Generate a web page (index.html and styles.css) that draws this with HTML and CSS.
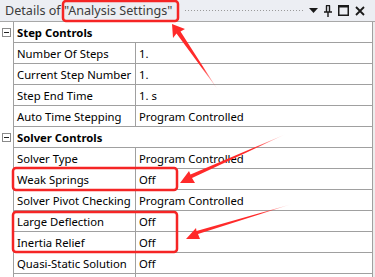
FILE: index.html
```html
<!DOCTYPE html>
<html lang="en">
  <head>
    <meta charset="UTF-8" />
    <title>Details of "Analysis Settings"</title>
    <link rel="stylesheet" href="styles.css">
  </head>
  <body>
    <div class="panel">
      <div class="titlebar">
        <span class="title">Details of "Analysis Settings"</span>
        <span class="grip"></span>
        <span class="tools">
          <svg width="9" height="6" viewBox="0 0 9 6"><path d="M0 0h9L4.5 5z" fill="#1a1a1a"/></svg>
          <svg width="8" height="12" viewBox="0 0 8 12"><path d="M2 0.5h4M2.5 0.5v6M5.5 0.5v6M0 7h8M4 7v5" stroke="#1a1a1a" stroke-width="1.4" fill="none"/></svg>
          <svg width="11" height="11" viewBox="0 0 11 11"><rect x="0.75" y="0.75" width="9.5" height="9.5" stroke="#1a1a1a" stroke-width="1.5" fill="none"/><path d="M0.75 1.5h9.5" stroke="#1a1a1a" stroke-width="2"/></svg>
          <svg width="10" height="10" viewBox="0 0 10 10"><path d="M1 1l8 8M9 1l-8 8" stroke="#1a1a1a" stroke-width="1.8"/></svg>
        </span>
      </div>

      <div class="props">
        <div class="row group">
          <div class="gutter"><span class="toggle"></span></div>
          <div class="name">Step Controls</div>
        </div>
        <div class="row"><div class="gutter"></div><div class="name">Number Of Steps</div><div class="value">1.</div></div>
        <div class="row"><div class="gutter"></div><div class="name">Current Step Number</div><div class="value">1.</div></div>
        <div class="row"><div class="gutter"></div><div class="name">Step End Time</div><div class="value">1. s</div></div>
        <div class="row"><div class="gutter"></div><div class="name">Auto Time Stepping</div><div class="value">Program Controlled</div></div>

        <div class="row group">
          <div class="gutter"><span class="toggle"></span></div>
          <div class="name">Solver Controls</div>
        </div>
        <div class="row"><div class="gutter"></div><div class="name">Solver Type</div><div class="value">Program Controlled</div></div>
        <div class="row"><div class="gutter"></div><div class="name">Weak Springs</div><div class="value">Off</div></div>
        <div class="row"><div class="gutter"></div><div class="name">Solver Pivot Checking</div><div class="value">Program Controlled</div></div>
        <div class="row"><div class="gutter"></div><div class="name">Large Deflection</div><div class="value">Off</div></div>
        <div class="row"><div class="gutter"></div><div class="name">Inertia Relief</div><div class="value">Off</div></div>
        <div class="row"><div class="gutter"></div><div class="name">Quasi-Static Solution</div><div class="value">Off</div></div>
        <div class="row"><div class="gutter"></div><div class="name"></div><div class="value"></div></div>
      </div>

      <!-- annotation marks drawn over the panel -->
      <svg class="marks" width="375" height="277" viewBox="0 0 375 277">
        <defs>
          <linearGradient id="fade1" gradientUnits="userSpaceOnUse" x1="218" y1="90" x2="172" y2="24">
            <stop offset="0" stop-color="#ff2a2a" stop-opacity="0"/>
            <stop offset="0.35" stop-color="#ff2a2a" stop-opacity="1"/>
          </linearGradient>
          <linearGradient id="fade2" gradientUnits="userSpaceOnUse" x1="286" y1="134" x2="180" y2="183">
            <stop offset="0" stop-color="#ff2a2a" stop-opacity="0"/>
            <stop offset="0.3" stop-color="#ff2a2a" stop-opacity="1"/>
          </linearGradient>
          <linearGradient id="fade3" gradientUnits="userSpaceOnUse" x1="292" y1="204" x2="186" y2="239">
            <stop offset="0" stop-color="#ff2a2a" stop-opacity="0"/>
            <stop offset="0.3" stop-color="#ff2a2a" stop-opacity="1"/>
          </linearGradient>
        </defs>

        <rect x="63" y="1" width="115" height="20" rx="3" class="box"/>
        <rect x="13" y="168" width="164" height="22" rx="3" class="box"/>
        <rect x="13" y="212" width="164" height="40" rx="3" class="box"/>

        <path d="M218 90L176.5 33.5L173 38L172 24L185 29L180.5 31.5Z" fill="url(#fade1)"/>
        <path d="M286 134L192 178L195 183L180 183L189 171L190.5 174.5Z" fill="url(#fade2)"/>
        <path d="M292 204L198 234L200 239L186 239L196 228L196.5 231Z" fill="url(#fade3)"/>
      </svg>
    </div>
  </body>
</html>
```

FILE: styles.css
```css
body {
  margin: 0;
  font-family: "Noto Sans", "Open Sans", sans-serif;
  font-size: 11.3px;
  color: #000;
  background: #e6e6e6;
}

.panel {
  position: relative;
  width: 375px;
  height: 277px;
  overflow: hidden;
  background: #ededed;
}

.titlebar {
  display: flex;
  align-items: center;
  height: 22px;
  padding-left: 5px;
  background: #eceef3;
  border-bottom: 1px solid #a8a8a8;
  box-sizing: border-box;
}

.title {
  font-size: 12.6px;
  color: #3c3c3c;
  white-space: nowrap;
}

.grip {
  flex: 1;
  height: 3px;
  margin: 0 6px 0 12px;
  background-image: radial-gradient(circle, #9a9a9a 0.6px, transparent 0.8px);
  background-size: 3px 3px;
}

.tools {
  display: flex;
  align-items: center;
  gap: 6px;
  padding-right: 10px;
}

.props {
  width: 372px;
  background: #fff;
  border-right: 1px solid #a0a0a0;
  box-sizing: content-box;
}

.row {
  display: grid;
  grid-template-columns: 14px 122px 1fr;
  height: 21px;
}

.gutter {
  border-right: 1px solid #a0a0a0;
  display: flex;
  align-items: center;
}

.name,
.value {
  display: flex;
  align-items: center;
  height: 20px;
  border-bottom: 1px solid #a0a0a0;
  padding-left: 3px;
  white-space: nowrap;
  overflow: hidden;
}

.name {
  border-right: 1px solid #a0a0a0;
}

.group {
  grid-template-columns: 14px 1fr;
}

.group .name {
  border-right: none;
  font-weight: bold;
}

.toggle {
  position: relative;
  width: 9px;
  height: 9px;
  margin-left: 2px;
  border: 1px solid #8a8a8a;
  box-sizing: border-box;
  background: #fff;
}

.toggle::after {
  content: "";
  position: absolute;
  left: 1px;
  right: 1px;
  top: 3px;
  height: 1px;
  background: #222;
}

.marks {
  position: absolute;
  left: 0;
  top: 0;
  pointer-events: none;
}

.box {
  fill: none;
  stroke: #f52525;
  stroke-width: 2.5;
}
```
